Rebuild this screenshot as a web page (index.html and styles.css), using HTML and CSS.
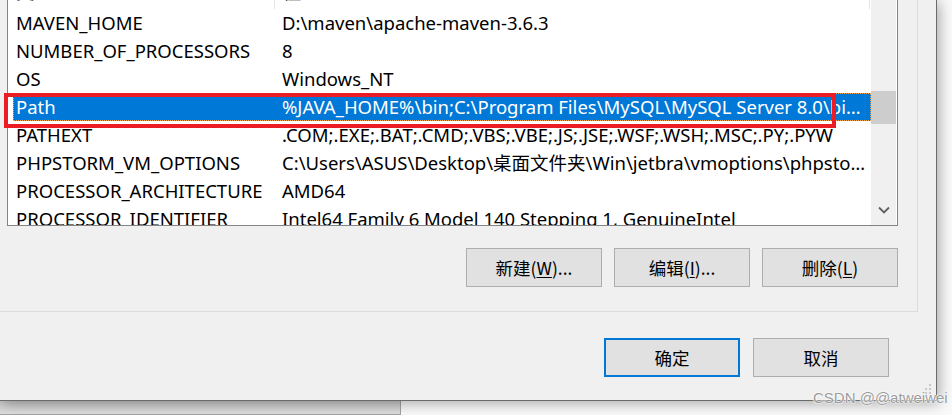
FILE: index.html
```html
<!DOCTYPE html>
<html lang="zh-CN">
<head>
<meta charset="utf-8">
<title>环境变量</title>
<link rel="stylesheet" href="styles.css">
</head>
<body>
<div class="stage">
  <div class="window">
    <div class="group">
      <div class="listbox">
        <div class="list-main">
          <div class="header">
            <div class="hcell hcell-name">变量</div>
            <div class="hcell hcell-value">值</div>
          </div>
          <div class="row"><div class="cell name">MAVEN_HOME</div><div class="cell value">D:\maven\apache-maven-3.6.3</div></div>
          <div class="row"><div class="cell name">NUMBER_OF_PROCESSORS</div><div class="cell value">8</div></div>
          <div class="row"><div class="cell name">OS</div><div class="cell value">Windows_NT</div></div>
          <div class="row selected"><div class="cell name">Path</div><div class="cell value">%JAVA_HOME%\bin;C:\Program Files\MySQL\MySQL Server 8.0\bin;C:\Windows\system32;C:\Windows</div></div>
          <div class="row"><div class="cell name">PATHEXT</div><div class="cell value">.COM;.EXE;.BAT;.CMD;.VBS;.VBE;.JS;.JSE;.WSF;.WSH;.MSC;.PY;.PYW</div></div>
          <div class="row"><div class="cell name">PHPSTORM_VM_OPTIONS</div><div class="cell value">C:\Users\ASUS\Desktop\桌面文件夹\Win\jetbra\vmoptions\phpstorm.vmoptions</div></div>
          <div class="row"><div class="cell name">PROCESSOR_ARCHITECTURE</div><div class="cell value">AMD64</div></div>
          <div class="row"><div class="cell name">PROCESSOR_IDENTIFIER</div><div class="cell value">Intel64 Family 6 Model 140 Stepping 1, GenuineIntel</div></div>
        </div>
        <div class="vscroll">
          <div class="thumb"></div>
          <div class="arrow-down">
            <svg width="12" height="8" viewBox="0 0 12 8"><path d="M1 1.5 L6 6.5 L11 1.5" fill="none" stroke="#606060" stroke-width="1.8"/></svg>
          </div>
        </div>
      </div>
      <div class="btn-row">
        <button class="btn">新建(<u>W</u>)...</button>
        <button class="btn">编辑(<u>I</u>)...</button>
        <button class="btn">删除(<u>L</u>)</button>
      </div>
    </div>
    <div class="dlg-buttons">
      <button class="btn btn-default">确定</button>
      <button class="btn">取消</button>
    </div>
    <svg class="grip" width="8" height="10" viewBox="0 0 8 10">
      <rect x="5" y="0" width="2" height="2" fill="#c8c8c8"/>
      <rect x="5" y="4" width="2" height="2" fill="#c8c8c8"/>
      <rect x="1" y="4" width="2" height="2" fill="#c8c8c8"/>
      <rect x="5" y="8" width="2" height="2" fill="#c8c8c8"/>
      <rect x="1" y="8" width="2" height="2" fill="#c8c8c8"/>
    </svg>
  </div>
  <div class="behind"></div>
  <div class="highlight-box"></div>
  <div class="watermark">CSDN @@atweiwei</div>
</div>
</body>
</html>
```
FILE: styles.css
```css
* { box-sizing: border-box; }
html, body { margin: 0; padding: 0; }
body {
  width: 952px;
  height: 415px;
  overflow: hidden;
  background: #fafafa;
  font-family: "Noto Sans", "Noto Sans CJK SC", sans-serif;
  color: #000;
}
.stage {
  position: relative;
  width: 952px;
  height: 415px;
  overflow: hidden;
}
.window {
  position: relative;
  z-index: 2;
  display: flex;
  flex-direction: column;
  width: 937px;
  height: 401px;
  background: #f0f0f0;
  border-right: 1px solid #6b6b6b;
  border-bottom: 1px solid #6b6b6b;
  box-shadow: 2px 2px 14px rgba(0,0,0,0.35);
}
.group {
  display: flex;
  flex-direction: column;
  flex: none;
  width: 918px;
  height: 312px;
  border-right: 1px solid #dcdcdc;
  border-bottom: 1px solid #dcdcdc;
  padding-left: 7px;
}
.listbox {
  display: flex;
  flex: none;
  width: 891px;
  height: 248px;
  margin-top: -22px;
  background: #fff;
  border: 1px solid #848484;
  padding-right: 1px;
  overflow: hidden;
}
.list-main {
  flex: 1;
  min-width: 0;
  overflow: hidden;
}
.header {
  display: flex;
  height: 30px;
  font-size: 18.5px;
}
.hcell {
  border-right: 1px solid #e5e5e5;
  white-space: nowrap;
  line-height: 25px;
}
.hcell-name { width: 267px; padding-left: 8px; }
.hcell-value { width: 595px; padding-left: 8px; }
.row {
  display: flex;
  height: 28px;
  margin-left: 5px;
  font-size: 18.5px;
  line-height: 28px;
  white-space: nowrap;
}
.cell { overflow: hidden; }
.name { width: 266px; padding-left: 3px; flex: none; }
.value {
  flex: 1;
  min-width: 0;
  padding-left: 3px;
  padding-right: 5px;
  text-overflow: ellipsis;
}
.row.selected {
  background: #0078d7;
  color: #fff;
  outline: 1px dotted #f2a54a;
  outline-offset: -1px;
}
.vscroll {
  width: 25px;
  flex: none;
  background: #f0f0f0;
  display: flex;
  flex-direction: column;
}
.thumb {
  margin-top: 112px;
  height: 33px;
  background: #cdcdcd;
}
.arrow-down {
  margin-top: auto;
  height: 27px;
  display: flex;
  align-items: center;
  justify-content: center;
  padding-bottom: 4px;
}
.btn-row {
  display: flex;
  justify-content: flex-end;
  gap: 12px;
  width: 891px;
  margin-top: 22px;
}
.btn {
  width: 136px;
  height: 39px;
  background: #e1e1e1;
  border: 1px solid #adadad;
  font-family: "Noto Sans CJK SC", "Noto Sans", sans-serif;
  font-size: 17.5px;
  color: #000;
  padding: 0;
  margin: 0;
}
.btn u { text-underline-offset: 2px; }
.btn-default { border: 2px solid #0078d7; }
.dlg-buttons {
  display: flex;
  justify-content: flex-end;
  gap: 13px;
  margin-top: 26px;
  padding-right: 47px;
}
.grip {
  position: absolute;
  right: 4px;
  bottom: 6px;
}
.behind {
  width: 401px;
  height: 14px;
  background: linear-gradient(#c9c9c9, #dedede);
  border-right: 1px solid #a3a3a3;
  border-bottom: 1px solid #a3a3a3;
}
.highlight-box {
  position: absolute;
  z-index: 3;
  left: 4px;
  top: 93px;
  width: 832px;
  height: 35px;
  border: 4px solid #ec1c24;
}
.watermark {
  position: absolute;
  z-index: 4;
  left: 813px;
  top: 389px;
  font-family: "Liberation Sans", sans-serif;
  font-size: 15px;
  color: #9c9c9c;
  text-shadow: 0 0 2px #fff, 0 0 2px #fff, 0 0 1px #fff;
  white-space: nowrap;
}
```
